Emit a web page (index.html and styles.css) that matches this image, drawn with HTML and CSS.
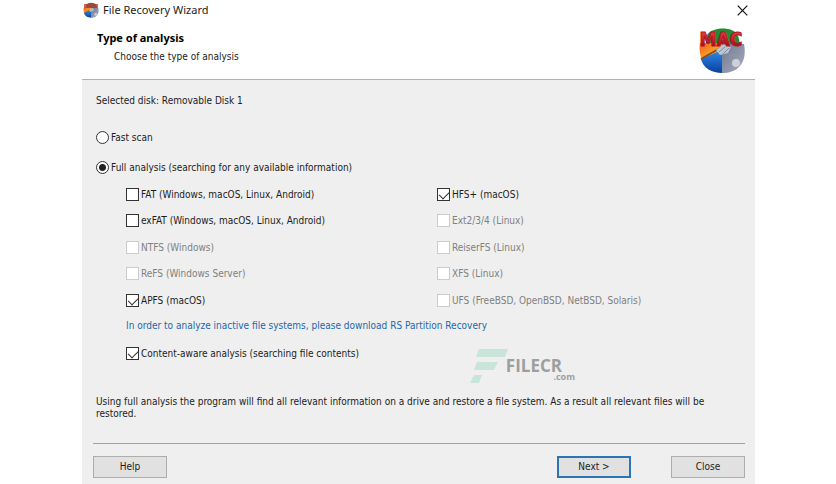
FILE: index.html
```html
<!DOCTYPE html>
<html lang="en">
<head>
<meta charset="utf-8">
<title>File Recovery Wizard</title>
<link rel="stylesheet" href="styles.css">
</head>
<body>
<main class="wizard">
  <header class="head">
    <div class="titlebar">
      <svg class="app-icon" viewBox="0 0 48 48" aria-hidden="true">
        <use href="#disk"/>
        <path d="M3 6H45V18H3z" fill="#c8323a" opacity=".75"/>
      </svg>
      <span class="app-name">File Recovery Wizard</span>
      <button class="close" type="button" aria-label="Close window">
        <svg viewBox="0 0 11 11"><path d="M.7.7l9.6 9.6M10.3.7L.7 10.3" stroke="#111" stroke-width="1.2"/></svg>
      </button>
    </div>
    <div class="intro">
      <div>
        <h1>Type of analysis</h1>
        <p class="sub">Choose the type of analysis</p>
      </div>
      <svg class="brand" viewBox="0 0 48 48" role="img" aria-label="MAC">
        <defs>
          <linearGradient id="red" x1="0" y1="0" x2="0" y2="1"><stop offset="0.2" stop-color="#ee3a43"/><stop offset=".8" stop-color="#a80d1c"/></linearGradient>
          <linearGradient id="blue" x1="0" y1="0" x2="0" y2="1"><stop offset="0" stop-color="#2d8be8"/><stop offset="1" stop-color="#0a3fa0"/></linearGradient>
          <linearGradient id="orange" x1="0" y1="0" x2="1" y2="1"><stop offset="0" stop-color="#f05a18"/><stop offset=".6" stop-color="#fba52c"/><stop offset="1" stop-color="#d85a10"/></linearGradient>
          <linearGradient id="grey" x1="0" y1="0" x2="1" y2="1"><stop offset="0" stop-color="#70788e"/><stop offset="1" stop-color="#a9afbf"/></linearGradient>
        </defs>
        <g id="disk">
          <path d="M9 9C14 1 34 0 40 9L43 22H7z" fill="#258a32"/>
          <path d="M2 17L24 17V25L4 34C2 30 1 22 2 17z" fill="url(#orange)"/>
          <path d="M3 33L24 24V47C14 47 5 42 3 33z" fill="url(#blue)"/>
          <path d="M3 33L24 21" stroke="#8a4a28" stroke-width="2"/>
          <path d="M24 18H46C48 28 46 36 41 41C37 45 31 47 24 47z" fill="url(#grey)"/>
          <path d="M18 24L26 18L33 21L30 27L22 29z" fill="#b9c6d3"/>
          <path d="M21 26L27 21M25 28L31 22" stroke="#7e8ea0"/>
          <circle cx="38" cy="37" r="4" fill="#cdd1da"/>
          <path d="M31 30L42 27" stroke="#8d93a6" stroke-width="2"/>
        </g>
        <text class="brand-text" x="23" y="20" text-anchor="middle" fill="url(#red)" stroke="#b01622">MAC</text>
      </svg>
    </div>
  </header>

  <form class="content">
    <p class="disk-line">Selected disk: Removable Disk 1</p>
    <label class="opt fast"><input type="radio" name="scan">Fast scan</label>
    <label class="opt"><input type="radio" name="scan" checked>Full analysis (searching for any available information)</label>

    <div class="nested">
      <div class="systems">
        <label class="opt"><input type="checkbox">FAT (Windows, macOS, Linux, Android)</label>
        <label class="opt"><input type="checkbox" checked>HFS+ (macOS)</label>
        <label class="opt"><input type="checkbox">exFAT (Windows, macOS, Linux, Android)</label>
        <label class="opt off"><input type="checkbox" disabled>Ext2/3/4 (Linux)</label>
        <label class="opt off"><input type="checkbox" disabled>NTFS (Windows)</label>
        <label class="opt off"><input type="checkbox" disabled>ReiserFS (Linux)</label>
        <label class="opt off"><input type="checkbox" disabled>ReFS (Windows Server)</label>
        <label class="opt off"><input type="checkbox" disabled>XFS (Linux)</label>
        <label class="opt"><input type="checkbox" checked>APFS (macOS)</label>
        <label class="opt off"><input type="checkbox" disabled>UFS (FreeBSD, OpenBSD, NetBSD, Solaris)</label>
      </div>
      <a class="download" href="#">In order to analyze inactive file systems, please download RS Partition Recovery</a>
      <label class="opt aware"><input type="checkbox" checked>Content-aware analysis (searching file contents)</label>
    </div>

    <p class="note">Using full analysis the program will find all relevant information on a drive and restore a file system. As a result all relevant files will be restored.</p>

    <footer class="actions">
      <button class="btn" type="button">Help</button>
      <button class="btn next" type="button">Next &gt;</button>
      <button class="btn" type="button">Close</button>
    </footer>

    <div class="watermark">
      <svg viewBox="0 0 40 34" aria-hidden="true"><path d="M9 0H38L35 8H6zM7 13H28L24 21H4zM4 26H12L9 34H0z" fill="#c9e5da"/></svg>
      <div class="mark-text">
        <span class="mark-name">FILECR</span>
        <span class="mark-domain">.com</span>
      </div>
    </div>
  </form>
</main>
</body>
</html>
```
FILE: styles.css
```css
* { box-sizing: border-box; }

body {
  margin: 0;
  padding: 0 81px 0 82px;
  background: #fff;
  color: #1c1c1c;
  font: 10px/12px "DejaVu Sans Condensed", "Noto Sans", sans-serif;
}

h1, p { margin: 0; }

.wizard {
  display: flex;
  flex-direction: column;
  min-height: 100vh;
}

.head {
  border-bottom: 1px solid #b0b0b0;
  padding-bottom: 5px;
}

.titlebar {
  display: flex;
  align-items: center;
  height: 20px;
  font-family: "Noto Sans", sans-serif;
  font-size: 11px;
}

.app-icon { width: 16px; height: 16px; margin: 0 4px 0 1px; }

.close {
  display: flex;
  margin-left: auto;
  margin-right: 7px;
  padding: 0;
  border: 0;
  background: none;
}

.close svg { width: 11px; height: 11px; }

.intro {
  display: flex;
  justify-content: space-between;
  padding: 6px 9px 0 15px;
}

h1 {
  margin-top: 6px;
  font: bold 11px/12px "Noto Sans", sans-serif;
  color: #000;
}

.sub { margin: 7px 0 0 17px; }

.brand { width: 48px; height: 48px; }

.brand-text {
  font: bold 19px "DejaVu Sans Condensed", sans-serif;
  stroke-width: 1px;
}

.content {
  position: relative;
  flex: 1;
  padding: 15px 10px 6px 14px;
  background: #efefef;
}

.opt {
  display: flex;
  align-items: flex-end;
  gap: 2px;
  height: 14px;
}

.disk-line { margin-bottom: 23px; }
.fast { margin-bottom: 16px; }

input {
  appearance: none;
  flex: none;
  width: 13px;
  height: 13px;
  margin: 0;
  border: 1px solid #333;
  background: #fff;
}

input[type="radio"] { border-radius: 50%; }

input[type="radio"]:checked {
  background: radial-gradient(circle, #222 0 3px, #fff 4px);
}

input[type="checkbox"]:checked::before {
  content: "";
  display: block;
  width: 9px;
  height: 5px;
  margin: 2px 0 0 1px;
  border: solid #333;
  border-width: 0 0 1px 1px;
  transform: rotate(-45deg);
  transform-origin: 50% 40%;
}

input:disabled { border-color: #ccc; }

.off { color: #808080; }

.nested { padding: 6px 0 0 30px; }

.systems {
  display: grid;
  grid-template-columns: 311px 1fr;
  grid-template-rows: repeat(2, 27px 26px) 27px;
  align-items: center;
}

.download {
  display: block;
  margin-top: 7px;
  color: #1f66ad;
  text-decoration: none;
}

.aware { margin-top: 14px; }

.note {
  margin-top: 36px;
  padding-right: 20px;
}

.actions {
  display: flex;
  margin: 23px 0 0 -3px;
  padding-top: 12px;
  border-top: 1px solid #a0a0a0;
}

.btn {
  width: 74px;
  height: 22px;
  padding: 0;
  border: 1px solid #adadad;
  background: #e1e1e1;
  color: inherit;
  font: inherit;
}

.next {
  margin: 0 40px 0 auto;
  border: 2px solid #2a76b4;
}

.watermark {
  position: absolute;
  right: 193px;
  bottom: 101px;
  display: flex;
  color: #9c9fa0;
  font-family: "Open Sans", sans-serif;
  font-weight: bold;
}

.watermark svg { width: 40px; height: 34px; }

.mark-text {
  display: flex;
  flex-direction: column;
  margin-left: -4px;
  padding-top: 8px;
}

.mark-name {
  font-size: 17px;
  line-height: 18px;
}

.mark-domain {
  margin: -3px -13px 0 0;
  text-align: right;
  font-size: 9px;
  line-height: 9px;
}
```
